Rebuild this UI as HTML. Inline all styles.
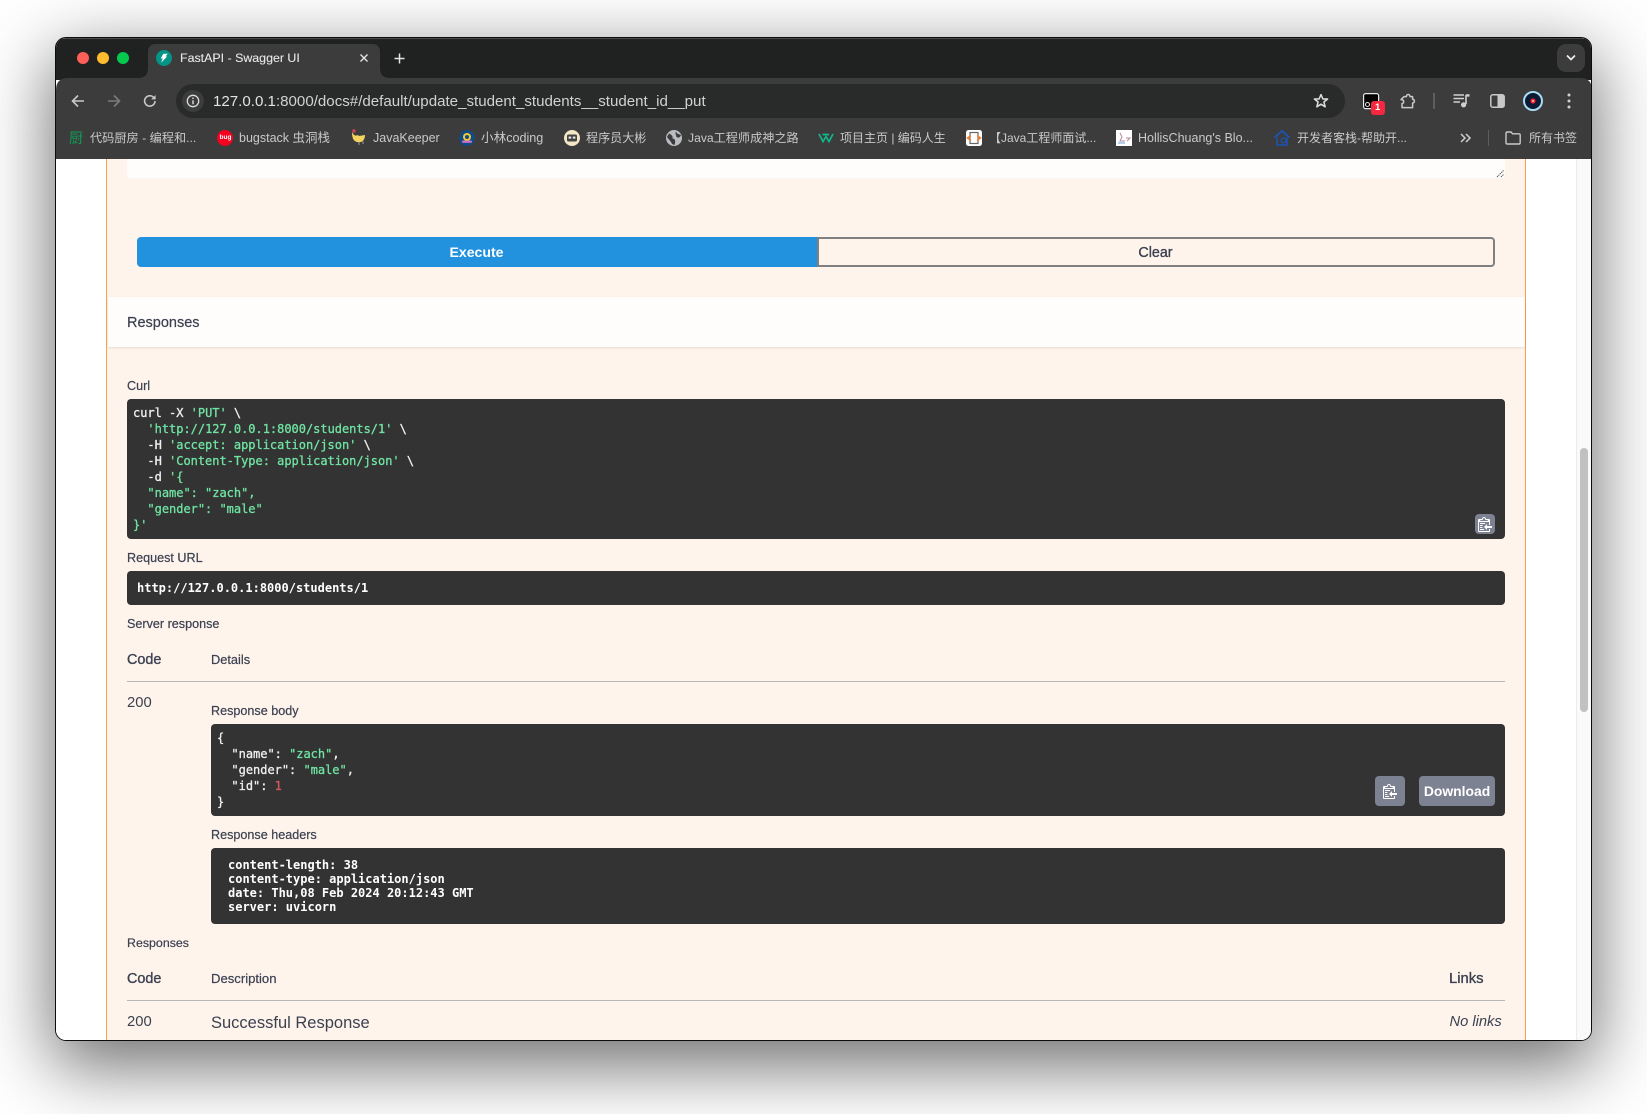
<!DOCTYPE html>
<html lang="zh"><head><meta charset="utf-8"><title>FastAPI - Swagger UI</title>
<style>
html,body{margin:0;padding:0;width:1647px;height:1114px;overflow:hidden;background:#fff}
body{position:relative;font-family:"Liberation Sans","Noto Sans CJK SC",sans-serif;color:#3b4151}
#win{position:absolute;left:55px;top:37px;width:1537px;height:1004px;box-sizing:border-box;border:1px solid #0c0c0c;border-radius:11px;box-shadow:0 22px 70px 4px rgba(0,0,0,.56);background:#fff}
#clip{position:absolute;left:0;top:0;width:1535px;height:1002px;overflow:hidden;border-radius:10px}
#in{position:absolute;left:-56px;top:-38px;width:1647px;height:1114px}
.a{position:absolute}
.t{position:absolute;white-space:nowrap;line-height:20px}
.bm{font-size:12.5px;color:#c9c9c9;top:128px}
.l{font-size:12.6px;color:#3b4151;-webkit-text-stroke:.2px #3b4151}
.h{font-size:14.4px;color:#3b4151;-webkit-text-stroke:.35px #3b4151}
.blk{position:absolute;background:#333;border-radius:4px}
pre{position:absolute;margin:0;font-family:"DejaVu Sans Mono","Liberation Mono",monospace;font-size:11.98px;color:#f0f0f0;white-space:pre}
.n{line-height:16px;-webkit-text-stroke:.3px currentColor}
.b{font-weight:bold;font-size:12px}
.g{color:#6fe4a2}
.r{color:#d9585c}
.btn{position:absolute;background:#7d8293;border-radius:4px}
svg{position:absolute;overflow:visible}
</style></head><body>
<div id="win"><div id="clip"><div id="in">

<div class="a" style="left:0;top:0;width:1647px;height:80px;background:#202221"></div>
<div class="a" style="left:56px;top:38px;width:1535px;height:1px;background:#4a4a4a"></div>
<svg style="left:0;top:0" width="1647" height="160">
<path fill="#3c3c3c" d="M56 90 Q56 78 68 78 H138 Q148 78 148 68 V52 Q148 44 156 44 H372 Q380 44 380 52 V68 Q380 78 390 78 H1580 Q1592 78 1592 90 V160 H56Z"/>
</svg>
<div class="a" style="left:56px;top:90px;width:1536px;height:69px;background:#3c3c3c"></div>

<div class="a" style="left:77px;top:52px;width:12px;height:12px;border-radius:50%;background:#fe5f57"></div>
<div class="a" style="left:97px;top:52px;width:12px;height:12px;border-radius:50%;background:#febc2e"></div>
<div class="a" style="left:117px;top:52px;width:12px;height:12px;border-radius:50%;background:#05c94f"></div>

<svg style="left:156px;top:50px" width="16" height="16" viewBox="0 0 16 16"><circle cx="8" cy="8" r="8" fill="#059485"/><path fill="#fff" d="M7.300 3.800H11.800L9.500 6.500H11.200L5 12.800 6.800 8.500H4.700Z"/></svg>
<div class="t" style="left:180px;top:48px;font-size:12.4px;color:#e8e8e8;-webkit-text-stroke:.1px #e8e8e8">FastAPI - Swagger UI</div>
<svg style="left:360px;top:54px" width="8" height="8"><path d="M.5 .5 7.500 7.500M7.500 .5 .5 7.500" stroke="#e4e4e4" stroke-width="1.4"/></svg>
<svg style="left:394px;top:53px" width="11" height="11"><path d="M5.500 .5V10.500M.5 5.500H10.500" stroke="#e4e4e4" stroke-width="1.5"/></svg>

<div class="a" style="left:1557px;top:44px;width:28px;height:28px;border-radius:9px;background:#3c3c3c"></div>
<svg style="left:1566px;top:54px" width="10" height="8"><path d="M1 1.500 5 5.500 9 1.500" fill="none" stroke="#eee" stroke-width="1.7"/></svg>

<svg style="left:70px;top:93px" width="16" height="16"><path d="M14 8H2.500M8 2.500 2.500 8 8 13.500" fill="none" stroke="#c8c8c8" stroke-width="1.6"/></svg>
<svg style="left:106px;top:93px" width="16" height="16"><path d="M2 8H13.500M8 2.500 13.500 8 8 13.500" fill="none" stroke="#7c7c7c" stroke-width="1.6"/></svg>
<svg style="left:142px;top:93px" width="16" height="16"><path d="M13 8A5.200 5.200 0 1 1 11.400 4.200L13.200 6" fill="none" stroke="#c8c8c8" stroke-width="1.6"/><path d="M13.600 2V6.400H9.200Z" fill="#c8c8c8"/></svg>

<div class="a" style="left:176px;top:84px;width:1169px;height:34px;border-radius:17px;background:#292a2a"></div>
<div class="a" style="left:182px;top:90px;width:22px;height:22px;border-radius:50%;background:#3c3c3c"></div>
<svg style="left:186px;top:94px" width="14" height="14"><circle cx="7" cy="7" r="5.700" fill="none" stroke="#dcdcdc" stroke-width="1.3"/><path d="M7 6.200V10.200" stroke="#dcdcdc" stroke-width="1.4"/><circle cx="7" cy="4.200" r=".85" fill="#dcdcdc"/></svg>
<div class="t" style="left:213px;top:91.500px;font-size:15.1px;color:#e3e3e3">127.0.0.1<span style="color:#d2d2d2">:8000/docs#/default/update_student_students__student_id__put</span></div>

<svg style="left:1313px;top:93px" width="16" height="16" viewBox="0 0 16 16"><path d="M8 1.600 9.900 6H14.600L10.900 9 12.200 13.800 8 11.200 3.800 13.800 5.100 9 1.400 6H6.100Z" fill="none" stroke="#dedede" stroke-width="1.5" stroke-linejoin="round"/></svg>

<svg style="left:1363px;top:93px" width="24" height="24"><rect x=".6" y=".6" width="15" height="15" rx="2" fill="#000" stroke="#e8e8e8" stroke-width="1.2"/><circle cx="4.500" cy="11.500" r="2" fill="none" stroke="#ddd" stroke-width="1.1"/></svg>
<div class="a" style="left:1371px;top:101px;width:14px;height:14px;border-radius:3px;background:#f5283f"></div>
<div class="t" style="left:1375px;top:98px;font-size:9.500px;font-weight:bold;color:#fff">1</div>

<svg style="left:1399px;top:93px" width="17" height="16"><path d="M5 3.600H7.400C7.400 .8 11 .8 11 3.600H13.600V6.200C16 6.200 16 10 13.600 10V14.600H3V10.600C5.400 10.600 5.400 6.400 2 6.600Z" fill="none" stroke="#c9c9c9" stroke-width="1.5" stroke-linejoin="round"/></svg>
<div class="a" style="left:1433px;top:93px;width:1.500px;height:16px;background:#5e5e5e"></div>
<svg style="left:1453px;top:93px" width="18" height="16"><path d="M.5 2H11M.5 5.500H11M.5 9H7" stroke="#d0d0d0" stroke-width="1.5"/><path d="M13 2V11" stroke="#d0d0d0" stroke-width="1.6"/><path d="M13 1.200H16.500V3.600H13Z" fill="#d0d0d0"/><circle cx="10.600" cy="11.800" r="2.600" fill="#d0d0d0"/></svg>
<svg style="left:1490px;top:94px" width="15" height="14"><rect x=".8" y=".8" width="13.400" height="12.400" rx="2" fill="none" stroke="#c9c9c9" stroke-width="1.500"/><rect x="7.500" y="1" width="6.500" height="12" fill="#c9c9c9"/></svg>
<svg style="left:1523px;top:91px" width="20" height="20"><circle cx="10" cy="10" r="9" fill="#0c1a33" stroke="#a8dcf5" stroke-width="2"/><circle cx="10" cy="10" r="2.600" fill="#f0203c"/><circle cx="10" cy="10" r="1" fill="#ffd0a0"/></svg>
<svg style="left:1567px;top:93px" width="4" height="16"><circle cx="2" cy="2" r="1.500" fill="#d0d0d0"/><circle cx="2" cy="8" r="1.500" fill="#d0d0d0"/><circle cx="2" cy="14" r="1.500" fill="#d0d0d0"/></svg>

<!-- bookmarks -->
<div class="t" style="left:69px;top:128px;font-size:14px;color:#0f9d58;font-family:'Noto Sans CJK SC',sans-serif">厨</div>
<div class="t bm" style="left:90px;font-size:12.200px">代码厨房 - 编程和...</div>
<div class="a" style="left:217px;top:130px;width:16px;height:16px;border-radius:50%;background:#f5001e"></div>
<div class="t" style="left:219.500px;top:128px;font-size:6.500px;font-weight:bold;color:#fff">bug</div>
<div class="t bm" style="left:239px">bugstack 虫洞栈</div>
<svg style="left:351px;top:129px" width="16" height="18"><path d="M1 3C5 10 6 4 8 7L14 6C14 12 10 14 6 13 2 12 1 8 1 3Z" fill="#f4d35e"/><circle cx="3" cy="2" r="1.700" fill="#d0435a"/><path d="M8 13V16M12 12V15" stroke="#999" stroke-width="1"/></svg>
<div class="t bm" style="left:373px">JavaKeeper</div>
<svg style="left:459px;top:130px" width="16" height="16"><circle cx="8" cy="8" r="8" fill="#124a84"/><circle cx="8" cy="7" r="4" fill="#f2cb3a"/><circle cx="8" cy="7" r="2" fill="#124a84"/><rect x="3" y="10.500" width="10" height="2.400" rx="1" fill="#c86fc8"/></svg>
<div class="t bm" style="left:481px;font-size:12.600px">小林coding</div>
<svg style="left:564px;top:130px" width="16" height="16"><circle cx="8" cy="8" r="8" fill="#f3e7c6"/><rect x="3" y="4.500" width="10" height="7" rx="1.500" fill="#444"/><rect x="4.600" y="6.600" width="2.600" height="2" fill="#eee"/><rect x="8.800" y="6.600" width="2.600" height="2" fill="#eee"/></svg>
<div class="t bm" style="left:586px;font-size:12.070px">程序员大彬</div>
<svg style="left:666px;top:130px" width="16" height="16"><circle cx="8" cy="8" r="8" fill="#b9bcc0"/><path d="M3 3.500C6 5 7 6 6.500 8.500 9 8.500 10 11 8.500 15L6 14C5 11 3 10 1 7ZM10 1.500C11 4 12.500 4 15 5 14 8 12 8 10.500 7 10 5 9 3 10 1.500Z" fill="#3c3c3c"/></svg>
<div class="t bm" style="left:688px;font-size:12.150px">Java工程师成神之路</div>
<svg style="left:818px;top:132px" width="16" height="12"><path d="M1 2 5 9.500 8 4.500 11 9.500 15 2M4.500 2.500H11" fill="none" stroke="#10b98a" stroke-width="1.7"/></svg>
<div class="t bm" style="left:840px;font-size:12px">项目主页 | 编码人生</div>
<div class="a" style="left:966px;top:130px;width:16px;height:16px;border-radius:2.500px;background:#fff"></div>
<svg style="left:966px;top:130px" width="16" height="16"><rect x="4" y="2.500" width="8" height="11" fill="none" stroke="#666" stroke-width="1.200"/><path d="M5 5.500 1.500 8 5 10.500M11 5.500 14.500 8 11 10.500" fill="none" stroke="#ef7d2d" stroke-width="1.500"/></svg>
<div class="t bm" style="left:989px;font-size:12px">【Java工程师面试...</div>
<div class="a" style="left:1116px;top:130px;width:16px;height:16px;background:#fff"></div>
<svg style="left:1116px;top:130px" width="16" height="16"><path d="M4 3 6 7 4 11H9M10 8H14L11 11" fill="none" stroke="#b48a9c" stroke-width="1"/><path d="M2 13H9" stroke="#7fb0d8" stroke-width="1.200"/></svg>
<div class="t bm" style="left:1138px">HollisChuang's Blo...</div>
<svg style="left:1274px;top:130px" width="16" height="16"><path d="M.5 7.500 8 1 15.500 7.500" fill="none" stroke="#1a55b8" stroke-width="1.800"/><path d="M3 7.500V15H13V7.500" fill="none" stroke="#1a55b8" stroke-width="1.400"/><circle cx="9.500" cy="10.500" r="2.400" fill="none" stroke="#1a55b8" stroke-width="1.200"/></svg>
<div class="t bm" style="left:1297px;font-size:12px">开发者客栈-帮助开...</div>
<svg style="left:1460px;top:133px" width="11" height="10"><path d="M1 1 5 5 1 9M6 1 10 5 6 9" fill="none" stroke="#cfcfcf" stroke-width="1.500"/></svg>
<div class="a" style="left:1487.500px;top:130px;width:1.500px;height:16px;background:#5e5e5e"></div>
<svg style="left:1505px;top:131px" width="16" height="14"><path d="M1 2.500Q1 1 2.400 1H6L7.600 2.800H14Q15.200 2.800 15.200 4V11.600Q15.200 13 14 13H2.200Q1 13 1 11.600Z" fill="none" stroke="#c9c9c9" stroke-width="1.400"/></svg>
<div class="t bm" style="left:1529px;font-size:12px">所有书签</div>

<!-- page -->
<div class="a" style="left:56px;top:159px;width:1536px;height:882px;background:#fff"></div>
<div class="a" style="left:1576px;top:159px;width:16px;height:882px;background:#fafafa;border-left:1px solid #ececec;box-sizing:border-box"></div>
<div class="a" style="left:1580px;top:448px;width:8px;height:264px;border-radius:4px;background:#c1c1c1"></div>

<div class="a" style="left:106px;top:159px;width:1420px;height:882px;background:#fff4ec;border-left:1.500px solid #fba344;border-right:1.500px solid #f4a04e;box-sizing:border-box"></div>
<div class="a" style="left:127px;top:159px;width:1378px;height:19px;background:#fffdfb;border-radius:0 0 3px 3px"></div>
<svg style="left:1497px;top:170px" width="7" height="8"><path d="M0 7 7 0M4 7 7 4" stroke="#555" stroke-width="1" stroke-dasharray="1.300 .7"/></svg>

<div class="a" style="left:137px;top:237px;width:680px;height:30px;background:#2291de;border-radius:4px 0 0 4px"></div>
<div class="t" style="left:137px;width:679px;text-align:center;top:242px;font-size:14.100px;font-weight:bold;color:#fff">Execute</div>
<div class="a" style="left:817px;top:237px;width:678px;height:30px;box-sizing:border-box;border:2px solid #808080;border-radius:0 4px 4px 0"></div>
<div class="t" style="left:817px;width:677px;text-align:center;top:242.500px;font-size:14.300px;-webkit-text-stroke:.35px #3b4151;color:#3b4151">Clear</div>

<div class="a" style="left:107.500px;top:297px;width:1417px;height:50px;background:#fffdfb;box-shadow:0 1px 2px rgba(0,0,0,.1)"></div>
<div class="t" style="left:127px;top:313px;font-size:14.500px;-webkit-text-stroke:.2px #3b4151">Responses</div>

<div class="t l" style="left:127px;top:376px">Curl</div>
<div class="blk" style="left:127px;top:399px;width:1378px;height:140px"></div>
<pre class="n" style="left:133px;top:405px">curl -X <span class="g">'PUT'</span> \
  <span class="g">'http://127.0.0.1:8000/students/1'</span> \
  -H <span class="g">'accept: application/json'</span> \
  -H <span class="g">'Content-Type: application/json'</span> \
  -d <span class="g">'{
  "name": "zach",
  "gender": "male"
}'</span></pre>
<div class="btn" style="left:1475px;top:514px;width:20px;height:20px"></div>
<svg style="left:1478px;top:516px" width="16" height="16" viewBox="0 0 16 16"><path fill="#fff" d="M2 13h4v1H2v-1zm5-6H2v1h5V7zm2 3V8l-3 3 3 3v-2h5v-2H9zM4.500 9H2v1h2.500V9zM2 12h2.500v-1H2v1zm9 1h1v2c-.02.28-.11.52-.3.700-.19.18-.42.28-.7.3H1c-.55 0-1-.45-1-1V4c0-.55.45-1 1-1h3c0-1.110.89-2 2-2 1.110 0 2 .89 2 2h3c.55 0 1 .45 1 1v5h-1V6H1v9h10v-2zM2 5h8c0-.55-.45-1-1-1H8c-.55 0-1-.45-1-1s-.45-1-1-1-1 .45-1 1-.45 1-1 1H3c-.55 0-1 .45-1 1z"/></svg>

<div class="t l" style="left:127px;top:548px">Request URL</div>
<div class="blk" style="left:127px;top:571px;width:1378px;height:34px"></div>
<pre class="b" style="left:137px;top:580px;line-height:16px;color:#fff">http://127.0.0.1:8000/students/1</pre>

<div class="t l" style="left:127px;top:614px">Server response</div>
<div class="t h" style="left:127px;top:650px">Code</div>
<div class="t l" style="left:211px;top:650px;font-size:12.800px">Details</div>
<div class="a" style="left:127px;top:681px;width:1378px;height:1px;background:#bab6b3"></div>
<div class="t" style="left:127px;top:693px;font-size:14.800px">200</div>
<div class="t l" style="left:211px;top:701px">Response body</div>
<div class="blk" style="left:211px;top:724px;width:1294px;height:92px"></div>
<pre class="n" style="left:217px;top:730px">{
  "name": <span class="g">"zach"</span>,
  "gender": <span class="g">"male"</span>,
  "id": <span class="r">1</span>
}</pre>
<div class="btn" style="left:1375px;top:776px;width:30px;height:30px"></div>
<svg style="left:1383px;top:783px" width="16" height="16" viewBox="0 0 16 16"><path fill="#fff" d="M2 13h4v1H2v-1zm5-6H2v1h5V7zm2 3V8l-3 3 3 3v-2h5v-2H9zM4.500 9H2v1h2.500V9zM2 12h2.500v-1H2v1zm9 1h1v2c-.02.28-.11.52-.3.700-.19.18-.42.28-.7.3H1c-.55 0-1-.45-1-1V4c0-.55.45-1 1-1h3c0-1.110.89-2 2-2 1.110 0 2 .89 2 2h3c.55 0 1 .45 1 1v5h-1V6H1v9h10v-2zM2 5h8c0-.55-.45-1-1-1H8c-.55 0-1-.45-1-1s-.45-1-1-1-1 .45-1 1-.45 1-1 1H3c-.55 0-1 .45-1 1z"/></svg>
<div class="btn" style="left:1419px;top:776px;width:76px;height:30px"></div>
<div class="t" style="left:1419px;width:76px;text-align:center;top:781px;font-size:13.900px;font-weight:bold;color:#fff">Download</div>

<div class="t l" style="left:211px;top:825px">Response headers</div>
<div class="blk" style="left:211px;top:848px;width:1294px;height:76px"></div>
<pre class="b" style="left:228px;top:858px;line-height:14px;color:#fff">content-length: 38
content-type: application/json
date: Thu,08 Feb 2024 20:12:43 GMT
server: uvicorn</pre>

<div class="t l" style="left:127px;top:933px;font-size:12.400px">Responses</div>
<div class="t h" style="left:127px;top:969px">Code</div>
<div class="t l" style="left:211px;top:969px;font-size:13.100px">Description</div>
<div class="t h" style="left:1449px;top:969px;font-size:14.800px">Links</div>
<div class="a" style="left:127px;top:1000px;width:1378px;height:1px;background:#bab6b3"></div>
<div class="t" style="left:127px;top:1012px;font-size:14.800px">200</div>
<div class="t" style="left:211px;top:1013px;font-size:16.500px">Successful Response</div>
<div class="t" style="left:1449.500px;top:1011.500px;font-size:14.700px;font-style:italic">No links</div>

</div></div></div>
</body></html>
